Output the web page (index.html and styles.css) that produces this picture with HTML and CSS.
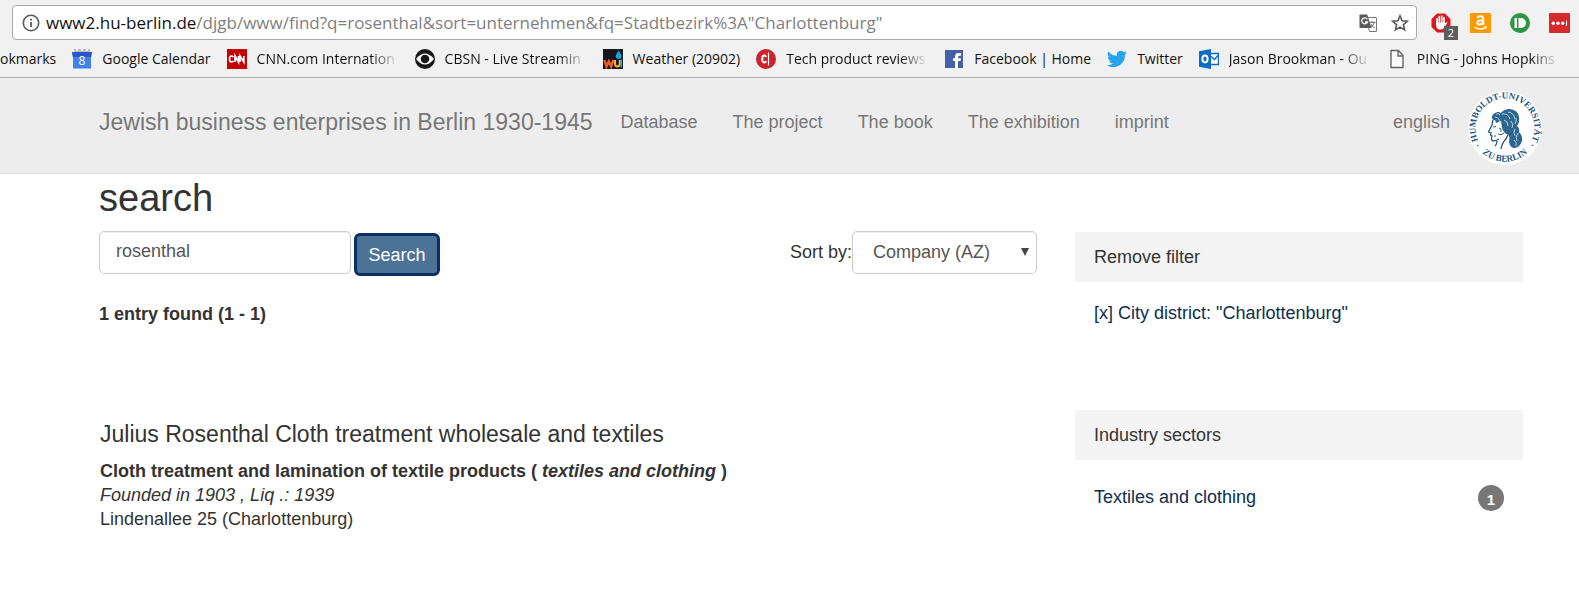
FILE: index.html
```html
<!DOCTYPE html>
<html lang="en">
<head>
<meta charset="utf-8">
<title>Jewish business enterprises in Berlin 1930-1945</title>
<link rel="stylesheet" href="styles.css">
</head>
<body>
<div class="browser">
  <div class="toolbar">
    <div class="omnibox">
      <svg class="info-icon" viewBox="0 0 18 18"><circle cx="9" cy="9" r="7.7" fill="none" stroke="#5a5a5a" stroke-width="1.6"/><path d="M9 8v5M9 4.7v1.8" stroke="#5a5a5a" stroke-width="1.8"/></svg>
      <div class="url"><span class="url-host">www2.hu-berlin.de</span>/djgb/www/find?q=rosenthal&amp;sort=unternehmen&amp;fq=Stadtbezirk%3A"Charlottenburg"</div>
      <button class="icon-button" aria-label="Translate this page">
        <svg width="18" height="18" viewBox="0 0 18 18"><path d="M7 3.500h10q.5 0 .5.5v13q0 .5-.5.5h-6.500z" fill="#fff" stroke="#777"/><path d="M1.200.500h7l4.300 13.500H1.200Q.500 14 .500 13.200V1.200Q.500.500 1.200.500z" fill="#5a5a5a"/><path d="M8.300 5.300A3 3 0 1 0 8.500 8H6" fill="none" stroke="#fff" stroke-width="1.300"/><path d="M10 8.300h6.500M13 7v1.300M15.300 8.500q-1 3.500-4 5M12 10q1.200 3 4 4.200" fill="none" stroke="#666"/></svg>
      </button>
      <button class="icon-button" aria-label="Bookmark this page">
        <svg width="18" height="18" viewBox="0 0 18 18"><path d="M9 1.800l2.100 4.900 5.300.5-4 3.500 1.200 5.200L9 13.100l-4.600 2.800 1.200-5.200-4-3.500 5.300-.5z" fill="none" stroke="#555" stroke-width="1.600"/></svg>
      </button>
    </div>
    <div class="extensions">
      <button class="icon-button ext" aria-label="Ad blocker">
        <svg width="20" height="20" viewBox="0 0 20 20"><path d="M6 .500h8L19.500 6v8L14 19.500H6L.500 14V6z" fill="#e0161d"/><path d="M6 11V5.500M8.300 10V3.500M10.700 10V3M13 10V4.500" stroke="#fff" stroke-width="1.700" stroke-linecap="round"/><path d="M5.200 9.500h8.600v1l2-1.500q1 .2.300 1.200L13 15q-1 1.500-4 1.500-3.800 0-3.800-4z" fill="#fff"/></svg>
        <span class="ext-count">2</span>
      </button>
      <button class="icon-button" aria-label="Amazon assistant">
        <svg width="21" height="20" viewBox="0 0 21 20"><rect width="21" height="20" rx="1" fill="#f90"/><path d="M7.500 5Q8 3.200 10.500 3.200q2.700 0 2.700 2.300v4q0 1 1 2M13 7.200q-5.700-.2-5.700 2.600 0 1.700 1.900 1.700 3.800 0 3.800-4" fill="none" stroke="#fff" stroke-width="2"/><path d="M4.500 14q5.500 3.800 11 .600" fill="none" stroke="#fff" stroke-width="1.500"/><path d="M14 13.300l3-.2-.8 3z" fill="#fff"/></svg>
      </button>
      <button class="icon-button" aria-label="Pushbullet">
        <svg width="20" height="20" viewBox="0 0 20 20"><circle cx="10" cy="10" r="10" fill="#2c9646"/><path d="M4.500 5h2.500v10H4.500zM8.500 5h2.500a5 5 0 0 1 0 10H8.500z" fill="#fff"/></svg>
      </button>
      <button class="icon-button" aria-label="LastPass">
        <svg width="21" height="20" viewBox="0 0 21 20"><rect width="21" height="20" rx="1" fill="#d7282d"/><g fill="#fff"><circle cx="4.300" cy="10.300" r="1.700"/><circle cx="9" cy="10.300" r="1.700"/><circle cx="13.700" cy="10.300" r="1.700"/><path d="M17 7.500h1v5.500h-1z"/></g></svg>
      </button>
    </div>
  </div>
  <nav class="bookmarks" aria-label="Bookmarks">
    <a class="bookmark" href="#">okmarks</a>
    <a class="bookmark" href="#">
      <svg width="20" height="20" viewBox="0 0 20 20"><path d="M2 0h16v3H2z" fill="#b9bdc8"/><path d="M4 0h2v2H4zM9 0h2v2H9zM14 0h2v2h-2z" fill="#eee"/><path d="M0 3h20l-1 6v10.500H1V9z" fill="#4081ec"/><path d="M0 3h20l-1 5H1z" fill="#2858c8"/><text x="10" y="16" text-anchor="middle" font-family="Open Sans, sans-serif" font-size="12" fill="#fff">8</text></svg>
      <span>Google Calendar</span></a>
    <a class="bookmark" href="#">
      <svg width="20" height="20" viewBox="0 0 20 20"><path d="M0 0h20v20H0z" fill="#c50000"/><path d="M6.500 8Q5.500 7 4.500 7 2.500 7 2.500 10t2 3q1 0 2-1M8 13V7l3.500 6V7M13 13V7l3.800 6V7" fill="none" stroke="#fff" stroke-width="1.700"/></svg>
      <span class="long">CNN.com Internation</span></a>
    <a class="bookmark" href="#">
      <svg width="20" height="20" viewBox="0 0 20 20"><circle cx="10" cy="10" r="10" fill="#181818"/><path d="M1 10q9-11 18 0-9 11-18 0z" fill="#fff"/><circle cx="10" cy="10" r="4.300" fill="#181818"/></svg>
      <span class="long">CBSN - Live Streamin</span></a>
    <a class="bookmark" href="#">
      <svg width="20" height="20" viewBox="0 0 20 20"><path d="M0 0h20v20H0z" fill="#17171b"/><path d="M15.500 1.500q3 4.200 3 5.500a2.800 2.800 0 0 1-5.700 0q0-1.300 2.700-5.500z" fill="#16a6e4"/><path d="M1.500 11l2 6.500 2.300-5 2.300 5L10.500 11" fill="none" stroke="#f05a23" stroke-width="2.500"/><path d="M12 11v3.500q0 3 2.300 3 2.500 0 2.500-3V11" fill="none" stroke="#f7b52b" stroke-width="2"/><path d="M18.300 10.500V18.500" stroke="#16a6e4" stroke-width="1.600"/></svg>
      <span>Weather (20902)</span></a>
    <a class="bookmark" href="#">
      <svg width="20" height="20" viewBox="0 0 20 20"><circle cx="10" cy="10" r="10" fill="#cf202e"/><path d="M10 8Q9.700 6.500 8.300 6.500 6.200 6.500 6.200 10t2.100 3.500Q9.700 13.500 10 12" fill="none" stroke="#fff" stroke-width="1.900"/><path d="M12.500 3.500v13" stroke="#fff" stroke-width="1.200"/></svg>
      <span class="long">Tech product reviews</span></a>
    <a class="bookmark" href="#">
      <svg width="20" height="20" viewBox="0 0 20 20"><path d="M1 1h18v18H1z" fill="#4560a8"/><path d="M11 19v-7H9V9.300h2V7.500Q11 4 14.500 4H17v2.800h-1.500q-1.500 0-1.500 1.500v1H17l-.4 2.700H14v7z" fill="#fff"/></svg>
      <span>Facebook | Home</span></a>
    <a class="bookmark" href="#">
      <svg width="20" height="20" viewBox="0 0 24 24"><path d="M24 4.600a10 10 0 0 1-2.800.8 4.900 4.900 0 0 0 2.100-2.700 10 10 0 0 1-3.100 1.200 4.900 4.900 0 0 0-8.400 4.500A14 14 0 0 1 1.700 3.100a4.900 4.900 0 0 0 1.500 6.600 5 5 0 0 1-2.200-.6 4.900 4.900 0 0 0 4 4.900 5 5 0 0 1-2.300.1 4.900 4.900 0 0 0 4.600 3.400A9.900 9.900 0 0 1 0 19.500 14 14 0 0 0 21.500 7a10 10 0 0 0 2.500-2.400z" fill="#26a4ec"/></svg>
      <span>Twitter</span></a>
    <a class="bookmark" href="#">
      <svg width="20" height="20" viewBox="0 0 20 20"><path d="M10 4.500h9.500v11H10z" fill="#fff" stroke="#0b6cc4" stroke-width="1.400"/><path d="M11 6.500l4.500 4 4-4.500" fill="none" stroke="#0b6cc4" stroke-width="1.400"/><path d="M0 2.300L12 0v20L0 17.700z" fill="#0b6cc4"/><ellipse cx="6" cy="10" rx="2.600" ry="3.400" fill="none" stroke="#fff" stroke-width="2"/></svg>
      <span class="long">Jason Brookman - Ou</span></a>
    <a class="bookmark" href="#">
      <svg width="20" height="20" viewBox="0 0 20 20"><path d="M4 1.500h7.500l4.500 5v12H4zM11 1.500V7h5" fill="#fafafa" stroke="#666" stroke-width="1.400"/></svg>
      <span class="long">PING - Johns Hopkins</span></a>
  </nav>
</div>
<header class="site-header">
  <a class="brand" href="#">Jewish business enterprises in Berlin 1930-1945</a>
  <nav class="site-nav">
    <a href="#">Database</a><a href="#">The project</a><a href="#">The book</a><a href="#">The exhibition</a><a href="#">imprint</a>
  </nav>
  <a class="language" href="#">english</a>
  <a class="seal" href="#" aria-label="Humboldt-Universität zu Berlin">
    <svg width="74" height="74" viewBox="0 0 74 74">
      <circle cx="37" cy="37" r="37" fill="#fff"/>
      <defs>
        <path id="seal-top" d="M20 61.200A29.500 29.500 0 1 1 54 61.200"/>
        <path id="seal-bottom" d="M7 52A33.500 33.500 0 0 0 67 52"/>
      </defs>
      <g font-family="Liberation Serif, serif" font-weight="bold" font-size="9" fill="#24577f">
        <text text-anchor="middle"><textPath href="#seal-top" startOffset="50%">· HUMBOLDT-UNIVERSITÄT ·</textPath></text>
        <text text-anchor="middle"><textPath href="#seal-bottom" startOffset="50%">ZU BERLIN</textPath></text>
      </g>
      <path d="M25 29q-3-4 2-7 3-2 6 0 3-4 9-4 8 1 9 8 1 5-2 9 3 2 2 6 4 4 3 9-2 6-7 7-5 0-6-6 1-4 0-7-5-1-7-7l-1-7-5 2-1-3z" fill="#2d678f"/>
      <path d="M25 29l-1 5-3.500 7 2.500 1-.5 2 1.500 1q-1.500 4 1 5 3 0 6-2M43 42q-4 2-5 6-4 4-5 10M29 50q0 3-2 5" fill="none" stroke="#24577f" stroke-width="1.300"/>
      <path d="M27 26q5 1 5 6M34 23q6-1 8 5M40 21q6 1 7 7M36 29q4 1 4 6M43 30q3 3 1 7M47 38q-2 4 0 7M50 42q-3 4-1 8M46 49q3 2 2 6M28 23q3-1 4 1M48 27q1 3-1 6" fill="none" stroke="#b6d2e2" stroke-width="1"/>
      <path d="M25 36l3-.5M26 45l2 0M31 37q3 0 2 4M30 43q3 2 6-1" fill="none" stroke="#24577f" stroke-width="1"/>
    </svg>
  </a>
</header>
<main class="page">
  <h1>search</h1>
  <div class="columns">
    <div class="results">
      <form class="search-form">
        <input class="field" type="text" name="q" value="rosenthal" aria-label="Search term">
        <button class="search-button" type="button">Search</button>
        <label class="sort-label" for="sort">Sort by:</label>
        <span class="select-wrap"><select class="field" id="sort" name="sort"><option>Company (AZ)</option></select><svg class="arrow" width="8" height="8" viewBox="0 0 8 8"><path d="M0 0h8L4 8z" fill="#444"/></svg></span>
      </form>
      <p class="count">1 entry found (1 - 1)</p>
      <article class="entry">
        <h2>Julius Rosenthal Cloth treatment wholesale and textiles</h2>
        <p class="trade">Cloth treatment and lamination of textile products ( <em>textiles and clothing</em> )</p>
        <p><em>Founded in 1903 , Liq .: 1939</em></p>
        <p>Lindenallee 25 (Charlottenburg)</p>
      </article>
    </div>
    <aside class="facets">
      <section class="facet">
        <h3>Remove filter</h3>
        <div class="facet-row"><a href="#">[x] City district: "Charlottenburg"</a></div>
      </section>
      <section class="facet">
        <h3>Industry sectors</h3>
        <div class="facet-row"><a href="#">Textiles and clothing</a><span class="badge">1</span></div>
      </section>
    </aside>
  </div>
</main>
</body>
</html>
```
FILE: styles.css
```css
* { box-sizing: border-box; }
body {
  margin: 0;
  background: #fff;
  color: #333;
  font: 18px/24px "Liberation Sans", Arial, sans-serif;
}
h1, h2, h3, p { margin: 0; font-weight: normal; }
a { color: inherit; text-decoration: none; }
svg { display: block; flex: none; }

/* Browser chrome */
.browser {
  background: #f1f1f1;
  border-bottom: 1px solid #b0b0b3;
  font-family: "Open Sans", "Noto Sans", sans-serif;
  overflow: hidden;
}
.toolbar {
  display: flex;
  align-items: center;
  padding: 5px 9px 0 12px;
  gap: 14px;
}
.omnibox {
  flex: 1;
  min-width: 0;
  display: flex;
  align-items: center;
  gap: 14px;
  height: 35px;
  padding: 0 7px 0 9px;
  background: #fff;
  border: 1px solid #a9a9a9;
  border-radius: 4px;
}
.info-icon { width: 18px; height: 18px; }
.url {
  flex: 1;
  min-width: 0;
  margin-left: -8px;
  overflow: hidden;
  white-space: nowrap;
  font-size: 17px;
  color: #808080;
}
.url-host { color: #111; }
.icon-button {
  display: block;
  padding: 0;
  border: 0;
  background: none;
}
.extensions { display: flex; gap: 19px; }
.ext { position: relative; }
.ext-count {
  position: absolute;
  left: 13px;
  top: 13px;
  width: 14px;
  height: 14px;
  background: #5e5e5e;
  color: #fff;
  font: 11px/14px "Open Sans", sans-serif;
}
.bookmarks {
  display: flex;
  align-items: center;
  height: 37px;
  gap: 16px;
  font-size: 14px;
  color: #111;
  white-space: nowrap;
}
.bookmark { display: flex; align-items: center; gap: 10px; flex: none; }
.long {
  width: 142px;
  -webkit-mask-image: linear-gradient(to right, #000 80%, transparent);
  mask-image: linear-gradient(to right, #000 80%, transparent);
}

/* Site header */
.site-header {
  display: flex;
  align-items: center;
  height: 96px;
  padding: 0 37px 0 99px;
  background: #ededed;
  border-bottom: 1px solid #e2e2e2;
  color: #777;
  white-space: nowrap;
}
.brand, .site-nav, .language { padding-bottom: 7px; }
.brand { font-size: 23px; }
.site-nav { display: flex; gap: 35px; margin-left: 28px; }
.language { margin-left: auto; }
.seal { margin: 5px 0 0 18px; }

/* Page */
.page { padding: 0 56px 0 99px; }
h1 { font-size: 38px; line-height: 42px; padding: 3px 0 12px; }
.columns { display: grid; grid-template-columns: 67fr 32fr; gap: 38px; }
.search-form { display: flex; align-items: flex-start; }
.field {
  height: 43px;
  width: 252px;
  padding: 0 16px 2px;
  font: inherit;
  color: #555;
  background: #fff;
  border: 1px solid #ccc;
  border-radius: 5px;
  box-shadow: inset 0 1px 1px #eee;
}
.search-button {
  height: 43px;
  width: 86px;
  margin: 2px 0 0 3px;
  padding: 0;
  font: inherit;
  color: #fff;
  background: #4c7396;
  border: 3px solid #0a2f60;
  border-radius: 6px;
}
.sort-label { margin-left: auto; padding-top: 9px; }
.select-wrap { position: relative; }
select.field { display: block; width: 185px; padding: 0 20px 2px; appearance: none; }
.arrow { position: absolute; right: 8px; top: 17px; pointer-events: none; }
.count { margin-top: 26px; font-weight: bold; }
.entry { margin: 94px 0 0 1px; }
.entry h2 { font-size: 23px; line-height: 28px; padding-bottom: 11px; }
.trade { font-weight: bold; }

.facets { padding-top: 1px; }
.facet h3 {
  padding: 13px 19px;
  font-size: 18px;
  line-height: 24px;
  background: #f4f4f4;
}
.facet-row {
  display: flex;
  justify-content: space-between;
  align-items: flex-start;
  padding: 19px 19px 85px;
  color: #0d2e4f;
}
.facet + .facet .facet-row { padding-top: 25px; }
.badge {
  width: 26px;
  height: 26px;
  border-radius: 13px;
  background: #777;
  color: #fff;
  font-size: 15px;
  font-weight: bold;
  line-height: 30px;
  text-align: center;
}
```
